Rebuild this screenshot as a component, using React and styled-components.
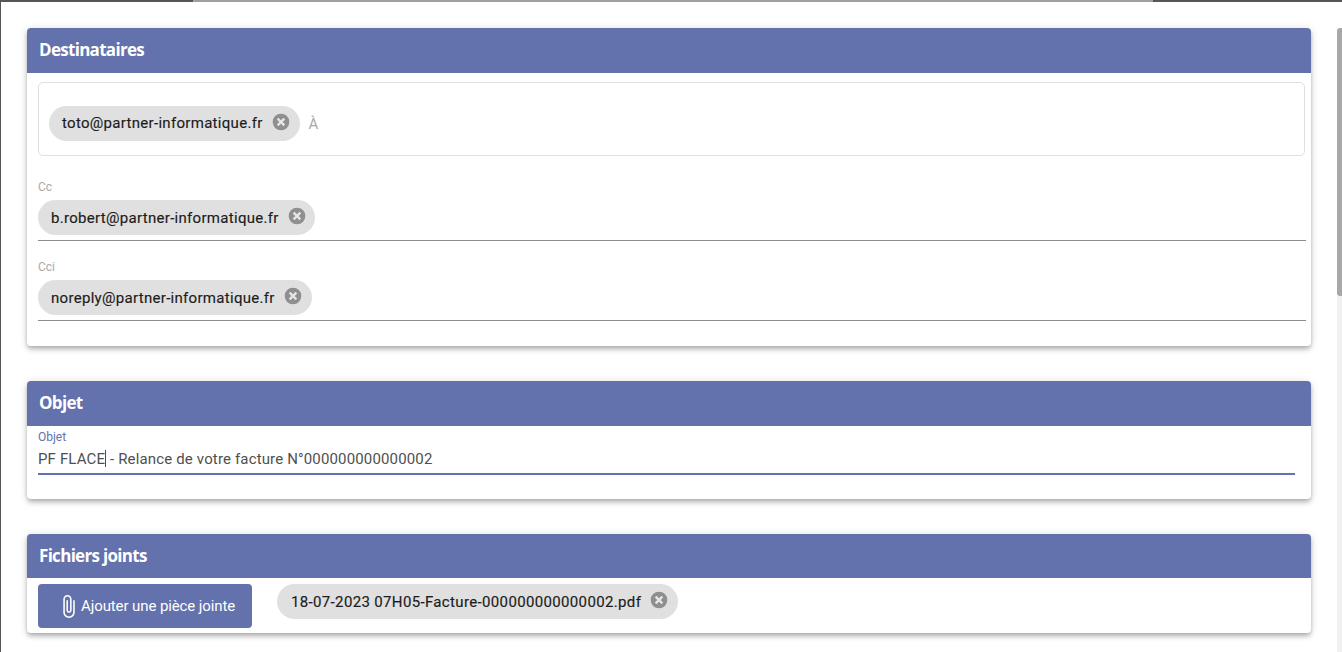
import React from "react";
import styled, { createGlobalStyle } from "styled-components";

const Global = createGlobalStyle`
  html, body { margin: 0; padding: 0; height: 652px; overflow: hidden; background: #fff; }
  body { font-family: Roboto, "Liberation Sans", sans-serif; }
`;
const Screen = styled.div`
  width: 1342px; height: 652px; overflow: hidden; display: flex; flex-direction: column;
  background: #fff;
`;
const TopStrip = styled.div`
  display: flex; height: 2px; flex: none;
`;
const StripPart = styled.div`
  width: ${p => p.$w}px; flex: ${p => (p.$w ? "none" : "1")};
  background: ${p => (p.$light ? "#a09f9f" : "#55565a")};
`;
const Body = styled.div`
  flex: 1; display: flex; min-height: 0; border-left: 1px solid #55565a;
`;
const Content = styled.main`
  flex: 1; display: flex; flex-direction: column; gap: 35px;
  padding: 26px 26px 0 26px; min-width: 0;
`;
const Rail = styled.div`
  width: 5px; flex: none; padding-top: 26px; display: flex; flex-direction: column;
`;
const Thumb = styled.div`
  height: 268px; background: #a8a8a8; border-radius: 3px 0 0 3px; flex: none;
`;
const Track = styled.div`
  flex: 1; background: #f1f1f1;
`;
const Card = styled.section`
  background: #fff; border-radius: 4px;
  box-shadow: 0 2px 4px -1px rgba(0,0,0,.2), 0 4px 5px 0 rgba(0,0,0,.14), 0 1px 10px 0 rgba(0,0,0,.12);
  flex: none;
`;
const CardHeader = styled.h2`
  margin: 0; height: ${p => p.$h || 45}px; background: #6371ad; color: #fff; box-sizing: border-box;
  border-radius: 4px 4px 0 0; padding: 0 12px ${p => p.$pb ?? 2}px; display: flex; align-items: center;
  font: 700 17px/22px "Open Sans", sans-serif; letter-spacing: -0.7px;
`;
const RecipientsBody = styled.div`
  padding: 9px 5px 25px 11px; height: 273px; box-sizing: border-box;
`;
const OutlinedField = styled.div`
  height: 74px; box-sizing: border-box; width: 1267px;
  border: 1px solid #e0e0e0; border-radius: 5px; padding: 8px 10px 0;
  display: flex; align-items: center; gap: 9px;
`;
const Placeholder = styled.span`
  font-size: 15px; color: #a8a8a8; padding-top: 2px;
`;
const StandardField = styled.div`
  margin-top: ${p => p.$mt}px; border-bottom: 1px solid #8c8c8c; height: 60px;
  box-sizing: border-box;
`;
const SmallLabel = styled.div`
  font-size: 12px; line-height: 13px; height: 13px; color: ${p => p.$color || "#aaa"};
`;
const Chip = styled.span`
  display: inline-flex; align-items: center; height: 35px; box-sizing: border-box;
  background: #e0e0e0; border-radius: 18px; padding: 0 ${p => p.$pr || 9}px 0 ${p => p.$pl || 13}px;
  color: #1c1c1c; font-size: 15px; letter-spacing: ${p => p.$ls || "0.3px"}; white-space: nowrap; margin-top: 6px;
  -webkit-text-stroke: 0.15px #1c1c1c;
`;
const FlatChip = styled(Chip)`
  margin-top: 0;
`;
const ChipIcon = styled.svg`
  width: 20px; height: 20px; margin-left: 8px; flex: none; position: relative; top: -1.5px;
`;
const ObjectBody = styled.div`
  height: 73px; box-sizing: border-box; padding: 5px 16px 0 11px;
`;
const ObjectInput = styled.div`
  margin-top: 4px; height: 25px; border-bottom: 2px solid #6371ad; box-sizing: content-box;
  font-size: 15px; line-height: 22px; color: #4f4f4f; letter-spacing: .15px; white-space: pre;
`;
const Caret = styled.span`
  display: inline-block; width: 1px; height: 17px; background: #4b3f8f; vertical-align: -3px;
`;
const FilesBody = styled.div`
  height: 55px; box-sizing: border-box; padding: 6px 0 0 11px; display: flex; align-items: flex-start; gap: 25px;
`;
const AttachButton = styled.button`
  width: 214px; height: 44px; background: #6371ad; color: #fff; border: 0; border-radius: 4px;
  display: flex; align-items: center; padding: 0 0 0 18px; box-sizing: border-box;
  font: 400 15px Roboto, sans-serif; letter-spacing: -.1px; gap: 0;
`;
const ClipIcon = styled.svg`
  width: 25px; height: 25px; fill: #fff; flex: none;
`;

const ClipPath = "M16.5 6v11.5c0 2.21-1.79 4-4 4s-4-1.79-4-4V5c0-1.38 1.12-2.5 2.5-2.5s2.5 1.12 2.5 2.5v10.5c0 .55-.45 1-1 1s-1-.45-1-1V6H10v9.5c0 1.38 1.12 2.5 2.5 2.5s2.5-1.12 2.5-2.5V5c0-2.21-1.79-4-4-4S7 2.79 7 5v12.5c0 3.04 2.46 5.5 5.5 5.5s5.5-2.46 5.5-5.5V6h-1.5z";

const CancelGlyph = () => (
  <ChipIcon viewBox="0 0 24 24">
    <circle cx="12" cy="12" r="10" fill="#8f8f8f" />
    <path d="M8 8l8 8M16 8l-8 8" stroke="#e6e6e6" strokeWidth="2.8" fill="none" />
  </ChipIcon>
);

export default function App() {
  return (
    <Screen>
      <Global />
      <TopStrip>
        <StripPart $w={193} />
        <StripPart $w={960} $light />
        <StripPart />
      </TopStrip>
      <Body>
        <Content>
          <Card>
            <CardHeader>Destinataires</CardHeader>
            <RecipientsBody>
              <OutlinedField>
                <FlatChip>toto@partner-informatique.fr<CancelGlyph /></FlatChip>
                <Placeholder>À</Placeholder>
              </OutlinedField>
              <StandardField $mt={25}>
                <SmallLabel>Cc</SmallLabel>
                <Chip $pr={8}>b.robert@partner-informatique.fr<CancelGlyph /></Chip>
              </StandardField>
              <StandardField $mt={20}>
                <SmallLabel>Cci</SmallLabel>
                <Chip>noreply@partner-informatique.fr<CancelGlyph /></Chip>
              </StandardField>
            </RecipientsBody>
          </Card>
          <Card>
            <CardHeader $pb={2}>Objet</CardHeader>
            <ObjectBody>
              <SmallLabel $color="#6371ad">Objet</SmallLabel>
              <ObjectInput>PF FLACE<Caret /> - Relance de votre facture N°000000000000002</ObjectInput>
            </ObjectBody>
          </Card>
          <Card>
            <CardHeader $h={44} $pb={0}>Fichiers joints</CardHeader>
            <FilesBody>
              <AttachButton>
                <ClipIcon viewBox="0 0 24 24"><path d={ClipPath} /></ClipIcon>
                Ajouter une pièce jointe
              </AttachButton>
              <FlatChip $ls="0.35px" $pl={14}>18-07-2023 07H05-Facture-000000000000002.pdf<CancelGlyph /></FlatChip>
            </FilesBody>
          </Card>
        </Content>
        <Rail>
          <Thumb />
          <Track />
        </Rail>
      </Body>
    </Screen>
  );
}
